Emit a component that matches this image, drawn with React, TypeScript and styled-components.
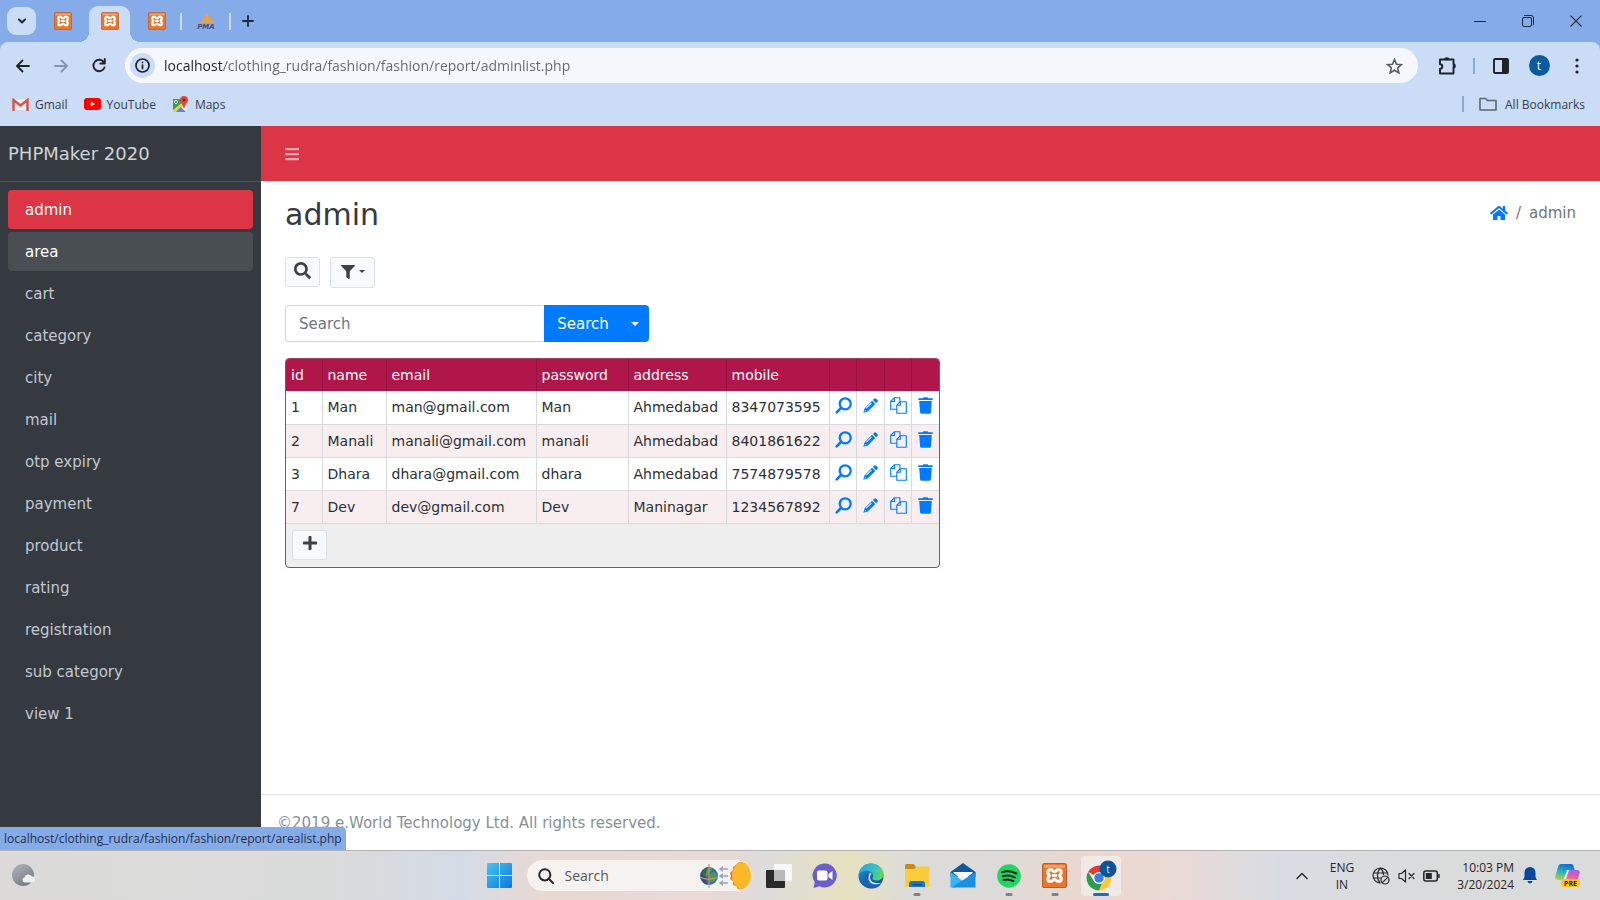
import React, { useState } from "react";
import styled, { createGlobalStyle, css } from "styled-components";
import { FaBars, FaFilter, FaHome, FaPlus, FaSearch } from "react-icons/fa";

const ui = `"Open Sans", "Noto Sans", sans-serif`;
const body = `"DejaVu Sans", Verdana, sans-serif`;

const GlobalStyle = createGlobalStyle`
  *, *::before, *::after { box-sizing: border-box; }
  body { margin: 0; font-family: ${body}; font-size: 14px; color: #212529; background: #fff; }
  button { font: inherit; padding: 0; border: 0; background: none; color: inherit; cursor: pointer; }
  a { color: inherit; text-decoration: none; }
  svg { display: block; flex: none; }
`;

const Screen = styled.div`
  min-height: 100vh;
  display: flex;
  flex-direction: column;
`;

/* ---------- Browser window ---------- */

const TabStrip = styled.div`
  display: flex;
  align-items: flex-end;
  height: 42px;
  background: #86abe9;
  color: #1f2937;
`;

const TabSearch = styled.button`
  width: 29px;
  height: 28px;
  margin: 0 3px 7px 7px;
  display: grid;
  place-items: center;
  border-radius: 9px;
  background: #cbdcf7;
`;

const Tab = styled.button<{ $active?: boolean }>`
  position: relative;
  width: 41px;
  height: 36px;
  margin: 0 3px;
  padding-bottom: 6px;
  display: grid;
  place-items: center;
  border-radius: 9px 9px 0 0;
  ${(p) =>
    p.$active &&
    css`
      background: #cbdcf7;
      &::before,
      &::after {
        content: "";
        position: absolute;
        bottom: 0;
        width: 10px;
        height: 10px;
      }
      &::before {
        right: 100%;
        background: radial-gradient(circle at 0 0, transparent 10px, #cbdcf7 10px);
      }
      &::after {
        left: 100%;
        background: radial-gradient(circle at 100% 0, transparent 10px, #cbdcf7 10px);
      }
    `}
`;

const TabDivider = styled.span`
  width: 2px;
  height: 17px;
  margin-bottom: 12px;
  background: #cbdcf7;
`;

const NewTab = styled.button`
  width: 33px;
  height: 42px;
  display: grid;
  place-items: center;
`;

const WindowButtons = styled.div`
  display: flex;
  height: 42px;
  margin-left: auto;
`;

const WindowButton = styled.button`
  width: 48px;
  display: grid;
  place-items: center;
`;

const Chrome = styled.header`
  background: #86abe9;
  font-family: ${ui};
`;

const ChromePanel = styled.div`
  height: 84px;
  border-radius: 8px 8px 0 0;
  background: #cbdcf7;
`;

const Toolbar = styled.div`
  display: flex;
  align-items: center;
  height: 47px;
  padding: 0 4px;
  color: #1f2328;
`;

const ToolButton = styled.button<{ $dim?: boolean }>`
  width: 38px;
  height: 36px;
  display: grid;
  place-items: center;
  color: ${(p) => (p.$dim ? "#8494ad" : "inherit")};
`;

const AddressBar = styled.div`
  flex: 1;
  height: 35px;
  margin: 0 10px 0 7px;
  padding: 0 15px 0 5px;
  display: flex;
  align-items: center;
  gap: 9px;
  border-radius: 18px;
  background: #f4f8fd;
`;

const SiteInfo = styled.button`
  width: 25px;
  height: 25px;
  display: grid;
  place-items: center;
  border-radius: 50%;
  background: #cbdcf7;
`;

const AddressInput = styled.input`
  flex: 1;
  min-width: 0;
  padding: 0;
  border: 0;
  outline: 0;
  font-family: ${ui};
  font-size: 14px;
  color: transparent;
  background: linear-gradient(90deg, #1f2328 59px, #62676e 59px);
  background-clip: text;
  -webkit-background-clip: text;
`;

const BarDivider = styled.span`
  width: 2px;
  height: 16px;
  margin: 0 7px;
  background: #86abe9;
`;

const Profile = styled.span`
  width: 21px;
  height: 21px;
  display: grid;
  place-items: center;
  border-radius: 50%;
  background: #0b5a9d;
  color: #fff;
  font-size: 12px;
  line-height: 20px;
`;

const Bookmarks = styled.nav`
  display: flex;
  align-items: center;
  gap: 16px;
  height: 30px;
  padding: 0 15px 0 12px;
  font-size: 12px;
  color: #34404f;
`;

const Bookmark = styled.a`
  display: flex;
  align-items: center;
  gap: 6px;
`;

const AllBookmarks = styled.div`
  display: flex;
  align-items: center;
  gap: 8px;
  margin-left: auto;
`;

/* ---------- Web page ---------- */

const Page = styled.div`
  position: relative;
  flex: 1;
  display: flex;
`;

const Sidebar = styled.aside`
  width: 261px;
  flex: none;
  background: #343a40;
  color: #c2c7d0;
`;

const Brand = styled.a`
  display: flex;
  align-items: center;
  height: 56px;
  padding: 0 8px;
  border-bottom: 1px solid #4b545c;
  font-size: 18px;
  color: #d0d3d6;
`;

const Menu = styled.nav`
  display: flex;
  flex-direction: column;
  gap: 3px;
  padding: 8px;
`;

const MenuLink = styled.a<{ $state?: "active" | "hover" }>`
  height: 39px;
  padding: 0 17px;
  display: flex;
  align-items: center;
  border-radius: 4px;
  font-size: 15px;
  color: ${(p) => (p.$state ? "#fff" : "#c2c7d0")};
  background: ${(p) =>
    p.$state === "active" ? "#dc3545" : p.$state === "hover" ? "#494e53" : "transparent"};
`;

const Main = styled.div`
  flex: 1;
  min-width: 0;
  display: flex;
  flex-direction: column;
`;

const NavBar = styled.div`
  height: 55px;
  padding: 0 23px;
  display: flex;
  align-items: center;
  background: #dc3545;
  color: #f3a9b0;
`;

const Content = styled.main`
  flex: 1;
  padding: 16px 24px;
`;

const Heading = styled.div`
  display: flex;
  justify-content: space-between;
  align-items: flex-start;
  height: 60px;
`;

const Title = styled.h1`
  margin: 0;
  font-size: 30px;
  line-height: 36px;
  font-weight: 400;
  color: #343a40;
`;

const Crumbs = styled.nav`
  display: flex;
  align-items: center;
  gap: 8px;
  height: 32px;
  font-size: 15px;
  color: #6c757d;
  a { color: #007bff; }
`;

const Tools = styled.div`
  display: flex;
  gap: 10px;
  height: 48px;
  align-items: flex-start;
`;

const LightButton = styled.button<{ $wide?: boolean }>`
  width: ${(p) => (p.$wide ? 45 : 35)}px;
  height: ${(p) => (p.$wide ? 31 : 30)}px;
  padding-bottom: ${(p) => (p.$wide ? 2 : 4)}px;
  display: flex;
  align-items: center;
  justify-content: center;
  gap: 4px;
  border: 1px solid #dddfe2;
  border-radius: 3px;
  background: #f8f9fa;
  color: #3c4147;
`;

const Caret = styled.span<{ $size: number }>`
  border: ${(p) => p.$size}px solid transparent;
  border-top-color: currentColor;
  border-bottom: 0;
`;

const SearchForm = styled.form`
  display: flex;
  width: 364px;
  height: 37px;
  margin-bottom: 16px;
`;

const SearchInput = styled.input`
  flex: 1;
  min-width: 0;
  padding: 0 13px;
  border: 1px solid #ced4da;
  border-right: 0;
  border-radius: 4px 0 0 4px;
  font-family: ${body};
  font-size: 15px;
  &::placeholder { color: #6c757d; opacity: 1; }
`;

const SearchButton = styled.button`
  width: 76px;
  padding-left: 2px;
  background: #007bff;
  color: #fff;
  font-size: 15px;
`;

const SearchMenu = styled.button`
  width: 29px;
  display: grid;
  place-items: center;
  border-radius: 0 4px 4px 0;
  background: #007bff;
  color: #fff;
`;

const GridBox = styled.div`
  width: 655px;
  border: 1px solid #a04464;
  border-radius: 4px;
  overflow: hidden;
  background: #eee;
`;

const Table = styled.table`
  width: 100%;
  table-layout: fixed;
  border-collapse: collapse;
  font-size: 14px;
`;

const HeadCell = styled.th`
  height: 32px;
  padding: 0 5px;
  border-right: 1px solid #8f1540;
  background: #b0164a;
  color: #fff;
  font-weight: 400;
  text-align: left;
  &:last-child { border-right: 0; }
`;

const Row = styled.tr`
  background: #fff;
  &:nth-child(even) { background: #f8edef; }
`;

const Cell = styled.td`
  height: 33px;
  padding: 0 5px;
  border-right: 1px solid #d9dadd;
  border-bottom: 1px solid #d9dadd;
  white-space: nowrap;
  color: #2b3035;
  &:last-child { border-right: 0; }
`;

const RowAction = styled.a`
  display: grid;
  place-items: center;
  padding-bottom: 3px;
  color: #007bff;
`;

const GridFooter = styled.div`
  height: 43px;
  padding: 6px;
`;

const Footer = styled.footer`
  height: 56px;
  padding: 0 16px;
  display: flex;
  align-items: center;
  border-top: 1px solid #dee2e6;
  font-size: 15px;
  color: #869099;
`;

const LinkStatus = styled.div`
  position: absolute;
  left: 0;
  bottom: 0;
  height: 23px;
  padding: 0 4px;
  border-radius: 0 4px 0 0;
  background: #86abe9;
  font-family: ${ui};
  font-size: 12px;
  line-height: 23px;
  color: #1f2f49;
`;

/* ---------- Taskbar ---------- */

const Taskbar = styled.footer`
  display: grid;
  grid-template-columns: 1fr auto 1fr;
  align-items: center;
  height: 50px;
  border-top: 1px solid #b3b3b3;
  background: linear-gradient(
    90deg,
    #dbdad9 0%,
    #d9dbda 20%,
    #d5dbe6 29%,
    #e8d9d3 34%,
    #ead9d4 44%,
    #dddcda 48%,
    #e6e1bf 53%,
    #dcdcdb 57%,
    #dddbda 62%,
    #ead7cf 68%,
    #ead9d4 73%,
    #d9dde3 80%,
    #dadbdc 88%,
    #dbdbdb 100%
  );
  font-family: ${ui};
  color: #24272b;
`;

const Weather = styled.button`
  justify-self: start;
  margin-left: 12px;
`;

const Apps = styled.div`
  display: flex;
  align-items: center;
  gap: 6px;
`;

const AppButton = styled.button<{ $active?: boolean }>`
  position: relative;
  width: 40px;
  height: 40px;
  display: grid;
  place-items: center;
  border-radius: 4px;
  background: ${(p) => (p.$active ? "#f1e9e6" : "none")};
`;

const Running = styled.span<{ $active?: boolean }>`
  position: absolute;
  bottom: 0;
  left: 50%;
  width: ${(p) => (p.$active ? 16 : 7)}px;
  height: 3px;
  border-radius: 2px;
  transform: translateX(-50%);
  background: ${(p) => (p.$active ? "#1271c4" : "#85807e")};
`;

const TaskSearch = styled.label`
  display: flex;
  align-items: center;
  gap: 11px;
  width: 227px;
  height: 33px;
  padding: 0 0 0 11px;
  border: 1px solid #e4dcd9;
  border-radius: 17px;
  background: #f6f2f0;
  input {
    flex: 1;
    min-width: 0;
    padding: 0;
    border: 0;
    outline: 0;
    background: none;
    font-family: ${ui};
    font-size: 14px;
  }
  input::placeholder { color: #55585b; opacity: 1; }
`;

const Tray = styled.div`
  justify-self: end;
  display: flex;
  align-items: center;
  padding-right: 20px;
  font-size: 12px;
  line-height: 17px;
`;

const Language = styled.button`
  margin: 0 18px 0 22px;
  text-align: center;
`;

const Status = styled.button`
  display: flex;
  align-items: center;
  gap: 8px;
`;

const Clock = styled.button`
  margin: 0 9px 0 17px;
  text-align: right;
`;

const Bell = styled.button`
  margin-right: 18px;
`;

/* ---------- Drawings ---------- */

const Xampp = ({ size }: { size: number }) => (
  <svg width={size} height={size} viewBox="0 0 24 24">
    <rect x="0.5" y="0.5" width="23" height="23" rx="2" fill="#ee7528" stroke="#b3602f" />
    <path d="M2 2h20v2.500H2z" fill="#f9a069" />
    <path
      d="M7.500 6.500h1.600c1 0 1.200 1.800 2.900 1.800s1.900-1.800 2.900-1.800h1.600c1.400 0 1.800 1 1.800 2v1.200c0 1-1.300 1.300-1.300 2.300s1.300 1.300 1.300 2.300v1.200c0 1-.4 2-1.800 2h-1.600c-1 0-1.200-1.800-2.900-1.800s-1.900 1.800-2.900 1.800H7.500c-1.400 0-1.800-1-1.800-2v-1.200c0-1 1.300-1.300 1.300-2.300S5.700 10.700 5.700 9.700V8.500c0-1 .4-2 1.800-2z"
      fill="none"
      stroke="#fff"
      strokeWidth="3"
      strokeLinejoin="round"
    />
    <path d="M9.500 12h5" stroke="#fff" strokeWidth="2.600" />
  </svg>
);

const Pma = () => (
  <svg width="18" height="18" viewBox="0 0 18 18">
    <path d="M8 11C9 8 9 4 8.500 0c3 3 5 7 5 11zM2 11c3-1 5-4 5.500-8 .8 3 .5 6-.5 8zM14 11c0-3-.8-5-1.500-7 2.500 2 4 4 4.500 7z" fill="#f0a13c" />
    <text x="9" y="17" fontSize="7" fontWeight="700" fontStyle="italic" fontFamily="DejaVu Sans, sans-serif" textAnchor="middle" fill="#4a4c83">PMA</text>
  </svg>
);

const stroke = { fill: "none", stroke: "currentColor", strokeLinejoin: "round", strokeLinecap: "round" } as const;

const Chevron = ({ up }: { up?: boolean }) => (
  <svg width="12" height="12" viewBox="0 0 12 12" {...stroke} strokeWidth={up ? 1.4 : 2}>
    <path d={up ? "M1 8.500L6 3.500L11 8.500" : "M3 4.500L6 7.500L9 4.500"} />
  </svg>
);

const Gmail = () => (
  <svg width="17" height="13" viewBox="0 0 17 13">
    <path d="M1 1.500h15V12H1z" fill="#eceff3" />
    <path d="M1.500 13V2l7 5.500 7-5.500v11" fill="none" stroke="#d95045" strokeWidth="2.400" />
  </svg>
);

const YouTube = () => (
  <svg width="17" height="12" viewBox="0 0 17 12">
    <rect width="17" height="12" rx="3" fill="#f00" />
    <path d="M6.800 3.500v5L11 6z" fill="#fff" />
  </svg>
);

const Maps = () => (
  <svg width="17" height="17" viewBox="0 0 17 17">
    <path d="M1 3h14v13H1z" fill="#e6e8e9" />
    <path d="M1 3h9v5l-9 8z" fill="#34a05a" />
    <path d="M1 14L12 5l2 2-9 9H1z" fill="#f5cc43" />
    <path d="M4 16l4.500-5 5.500 5z" fill="#4a8af0" />
    <circle cx="4" cy="6" r="1.600" fill="none" stroke="#fff" />
    <path d="M12 0a4 4 0 0 1 4 4c0 3-3 4-3.500 8h-1C11 8 8 7 8 4a4 4 0 0 1 4-4z" fill="#dd4b3e" />
    <circle cx="12" cy="4" r="1.400" fill="#7c211b" />
  </svg>
);

const ViewIcon = () => (
  <svg width="17" height="17" viewBox="0 0 17 17" fill="none" stroke="currentColor">
    <circle cx="10.200" cy="6.800" r="5.500" strokeWidth="2.300" />
    <path d="M6 11L1.700 15.300" strokeWidth="2.600" strokeLinecap="round" />
  </svg>
);

const EditIcon = () => (
  <svg width="15" height="15" viewBox="0 0 15 15" fill="currentColor">
    <path d="M11.200.7a1.400 1.400 0 0 1 2 0l1.200 1.200a1.400 1.400 0 0 1 0 2l-1.300 1.300-3.200-3.200zM9.100 2.800L12.300 6 4.700 13.600.3 14.800 1.500 10.400zM3.600 10.600l5.200-5.200-.7-.7-5.200 5.200zM1.600 13.500l1.500-.4-1.100-1.100z" fillRule="evenodd" />
  </svg>
);

const CopyIcon = () => (
  <svg width="17" height="17" viewBox="0 0 17 17" fill="none" stroke="currentColor" strokeWidth="1.100" strokeLinejoin="round">
    <path d="M6.500 12.200H.7V4.500L4.500.7h5.400v4M4.500.7v3.800H.7M10.300 4.700h6v11.600H6.800V8.200zM10.300 4.700v3.600H6.800" />
  </svg>
);

const TrashIcon = () => (
  <svg width="15" height="17" viewBox="0 0 15 17" fill="currentColor">
    <path d="M.3 1.300h4.300L5.400.3h4.200l.8 1h4.300v1.600H.3zM1.200 4h12.600l-.9 11.500a1.500 1.500 0 0 1-1.500 1.300H3.600a1.500 1.500 0 0 1-1.500-1.300z" />
  </svg>
);

const WeatherIcon = () => (
  <svg width="23" height="23" viewBox="0 0 23 23">
    <defs>
      <linearGradient id="moon" x1="0" y1="0" x2="0.600" y2="1">
        <stop offset="0" stopColor="#b2b8bf" />
        <stop offset="1" stopColor="#747b84" />
      </linearGradient>
    </defs>
    <circle cx="11" cy="11" r="11" fill="url(#moon)" />
    <path d="M12.500 18.500a2.700 2.700 0 0 1 0-5.200 4 4 0 0 1 7.300-.8 3 3 0 0 1 1 6z" fill="#edf0f3" />
  </svg>
);

const Windows = () => (
  <svg width="25" height="25" viewBox="0 0 25 25">
    <defs>
      <linearGradient id="win" x1="0" y1="0" x2="1" y2="1">
        <stop offset="0" stopColor="#45c6f5" />
        <stop offset="1" stopColor="#0b77d6" />
      </linearGradient>
    </defs>
    <path d="M1 0h11v12H0V1a1 1 0 0 1 1-1zM13 0h11a1 1 0 0 1 1 1v11H13zM0 13h12v12H1a1 1 0 0 1-1-1zM13 13h12v11a1 1 0 0 1-1 1H13z" fill="url(#win)" />
  </svg>
);

const Equinox = () => (
  <svg width="54" height="29" viewBox="0 0 54 29">
    <circle cx="11" cy="15" r="9" fill="#326fa8" />
    <path d="M5 9c3-4 8-3 9-1 0 3-3 2-3 5s-5 3-7 1zM13 12c3-2 6 0 6 3-1 4-4 7-6 6-1-3-2-6 0-9z" fill="#4f9a51" />
    <path d="M3 12a9 9 0 0 0 7 12c-4-5-3-14 1-18a9 9 0 0 0-8 6z" fill="#20364f" opacity="0.500" />
    <path d="M11 3v24M2 16c5 3 13 3 18 0" stroke="#e18b6b" strokeWidth="1.200" fill="none" />
    <path d="M22 8h8M22 15h8M22 22h8M25 5.800L22 8l3 2.200M25 12.800L22 15l3 2.200M25 19.800L22 22l3 2.200" stroke="#91a6c4" strokeWidth="1.400" fill="none" />
    <path d="M41 1l-3 3-3 2 0 3-3 3 1 3-1 3 3 2 0 4 3 1 2 3h5V1z" fill="#e37a26" />
    <path d="M42 1c7 0 11 6 11 13.500S49 28 42 28c-6-3-8-8-8-13.500S37 4 42 1z" fill="#fbb829" />
  </svg>
);

const TaskView = () => (
  <svg width="26" height="25" viewBox="0 0 26 25">
    <rect x="0" y="7" width="19" height="18" rx="1" fill="#29292a" />
    <rect x="8" y="1" width="18" height="17" rx="1" fill="#f7f7f7" />
    <path d="M8 7h11v11H8z" fill="#b9b9b9" />
  </svg>
);

const Chat = () => (
  <svg width="25" height="25" viewBox="0 0 25 25">
    <path d="M13 .5a12 12 0 1 1-5.500 22.800L1.500 25l1.200-5.800A12 12 0 0 1 13 .5z" fill="#6b5fc7" />
    <rect x="5" y="7.500" width="10.500" height="10" rx="2" fill="#fff" />
    <path d="M16.500 11l4-3v9l-4-3z" fill="#fff" />
  </svg>
);

const Edge = () => (
  <svg width="26" height="26" viewBox="0 0 26 26">
    <defs>
      <linearGradient id="edgeTop" x1="0" y1="0.300" x2="1" y2="0.500">
        <stop offset="0" stopColor="#2ba6e0" />
        <stop offset="0.600" stopColor="#35c1c0" />
        <stop offset="1" stopColor="#65d957" />
      </linearGradient>
      <linearGradient id="edgeBase" x1="0" y1="0" x2="0.600" y2="1">
        <stop offset="0" stopColor="#1c8fdc" />
        <stop offset="1" stopColor="#114f9b" />
      </linearGradient>
    </defs>
    <circle cx="13" cy="13" r="12.500" fill="url(#edgeBase)" />
    <path d="M.6 12C1.400 5 6.500.5 13 .5c7 0 12.500 5 12.500 10.500 0 4-3 6.500-6.500 6.500-3 0-5-1-4.500-2.500 1-1.500 1-3.500-.5-5C11 7 4 6.500.6 12z" fill="url(#edgeTop)" />
    <path d="M12 9.500c-6 4-3 13 3.500 13.500 3 .2 6-1 8-3.500-3 1-11 1.500-11.500-5-.1-1.500.6-2.500 1.500-3.500z" fill="#dbe4e6" />
    <path d="M12 9.500c-7 2-7 13 2 15.800 4 .5 8-1.800 9.500-5.800-5 3.500-13 2-13-4.500 0-2 .8-4 1.500-5.500z" fill="#1a62b4" />
  </svg>
);

const Folder = () => (
  <svg width="26" height="24" viewBox="0 0 26 24">
    <path d="M1 1.500A1.500 1.500 0 0 1 2.500 0h7l2.500 3v4H1z" fill="#c98b10" />
    <path d="M1 5h9l3-2.500h11a1.500 1.500 0 0 1 1.500 1.500v18a1 1 0 0 1-1 1H2a1 1 0 0 1-1-1z" fill="#fbcb3e" />
    <path d="M5 23v-3.500a2.500 2.500 0 0 1 2.500-2.500h11a2.500 2.500 0 0 1 2.500 2.500V23z" fill="#1a76c9" />
    <path d="M8.500 20h9v1.500h-9z" fill="#0b5192" />
  </svg>
);

const Mail = () => (
  <svg width="26" height="25" viewBox="0 0 26 25">
    <path d="M.5 9L13 0l12.500 9v5H.5z" fill="#12569b" />
    <path d="M3 9.500h20L13 18z" fill="#fff" />
    <path d="M.5 9L16 20.500 6 24.500H.5z" fill="#37b5f3" />
    <path d="M25.500 9v15.500H1.500z" fill="#1b8fe3" />
    <path d="M3 9h20l-10 7.500z" fill="#f5f9fc" />
  </svg>
);

const Spotify = () => (
  <svg width="24" height="24" viewBox="0 0 24 24">
    <circle cx="12" cy="12" r="11.800" fill="#1fd661" />
    <path d="M5 8.300c5-1.600 10-1 14.300 1.200M5.800 12.300c4.300-1.300 8.500-.8 12 1.200M6.500 16c3.600-1 7-.6 10 1.100" fill="none" stroke="#101c14" strokeWidth="2" strokeLinecap="round" />
  </svg>
);

const ChromeLogo = () => (
  <svg width="34" height="32" viewBox="-1 0 34 32">
    <path d="M14 18L3.200 11.800A12.500 12.500 0 0 1 24.800 11.800z" fill="#e33b2e" />
    <path d="M14 12h10.800A12.500 12.500 0 0 1 14 30.500l4-9z" fill="#fcc934" />
    <path d="M3.200 11.800L8.800 21l8.200 2.500-3 7A12.500 12.500 0 0 1 3.200 11.800z" fill="#2a9e4b" />
    <circle cx="14" cy="18" r="6" fill="#fff" />
    <circle cx="14" cy="18" r="4.700" fill="#3a7de8" />
    <circle cx="23" cy="9" r="8.500" fill="#0b5596" />
    <text x="23" y="12.500" fontSize="10" textAnchor="middle" fontFamily="Open Sans, sans-serif" fill="#d8e7f5">t</text>
  </svg>
);

const NetworkIcon = () => (
  <svg width="18" height="18" viewBox="0 0 18 18" {...stroke} strokeWidth="1.200">
    <path d="M16 8A7.500 7.500 0 1 0 8 16M1.500 6h14M1.500 11h7M8.500 1c-4 4-4 11-.5 15M8.500 1c2 2 3 4 3 6.500" />
    <circle cx="13" cy="13" r="4" />
    <path d="M10.300 15.700l5.400-5.400" />
  </svg>
);

const MuteIcon = () => (
  <svg width="17" height="16" viewBox="0 0 17 16" {...stroke} strokeWidth="1.200">
    <path d="M1 5.500h2.500L7.500 2v12L3.500 10.500H1zM11 5.500l5 5M16 5.500l-5 5" />
  </svg>
);

const BatteryIcon = () => (
  <svg width="17" height="12" viewBox="0 0 17 12">
    <rect x="0.800" y="1" width="13.500" height="10" rx="2" fill="none" stroke="currentColor" strokeWidth="1.500" />
    <path d="M2.800 3h6v6h-6zM15.200 4h1.500v4h-1.500z" fill="currentColor" />
  </svg>
);

const Copilot = () => (
  <svg width="25" height="25" viewBox="0 0 25 25">
    <defs>
      <linearGradient id="cpA" x1="0.500" y1="0" x2="0.200" y2="1">
        <stop offset="0" stopColor="#1767d2" />
        <stop offset="0.500" stopColor="#25b5bd" />
        <stop offset="1" stopColor="#c9cf3f" />
      </linearGradient>
      <linearGradient id="cpB" x1="0.500" y1="0" x2="0.300" y2="1">
        <stop offset="0" stopColor="#9f61e7" />
        <stop offset="0.600" stopColor="#ec5da4" />
        <stop offset="1" stopColor="#f58a5b" />
      </linearGradient>
    </defs>
    <path d="M6 1h10c2 0 2.500 1.500 3 4l1 3h-6l-3 8c-.5 1-1.500 1-2.500 1H3c-2.500 0-3.500-2-2.500-4.500L3 4c.6-2 1.500-3 3-3z" fill="url(#cpA)" />
    <path d="M15 7h7c2.500 0 3 2 2.400 4l-2 7H10l2.500-8.500C13 8 13.600 7 15 7z" fill="url(#cpB)" />
    <path d="M12 7h2l-3 9H9z" fill="#eef3f7" />
    <rect x="6" y="16" width="19" height="8" rx="2" fill="#fcc526" />
    <text x="15.500" y="23" fontSize="7" fontWeight="700" textAnchor="middle" fontFamily="Open Sans, sans-serif" fill="#2c2410">PRE</text>
  </svg>
);

/* ---------- Data ---------- */

const menu = ["admin", "area", "cart", "category", "city", "mail", "otp expiry", "payment", "product", "rating", "registration", "sub category", "view 1"];

const columns = [
  { label: "id", width: 36 },
  { label: "name", width: 64 },
  { label: "email", width: 150 },
  { label: "password", width: 92 },
  { label: "address", width: 98 },
  { label: "mobile", width: 103 },
];

const records = [
  ["1", "Man", "man@gmail.com", "Man", "Ahmedabad", "8347073595"],
  ["2", "Manali", "manali@gmail.com", "manali", "Ahmedabad", "8401861622"],
  ["3", "Dhara", "dhara@gmail.com", "dhara", "Ahmedabad", "7574879578"],
  ["7", "Dev", "dev@gmail.com", "Dev", "Maninagar", "1234567892"],
];

const actions = [
  { name: "View", icon: <ViewIcon /> },
  { name: "Edit", icon: <EditIcon /> },
  { name: "Copy", icon: <CopyIcon /> },
  { name: "Delete", icon: <TrashIcon /> },
];

const apps = [
  { name: "Task view", icon: <TaskView /> },
  { name: "Chat", icon: <Chat /> },
  { name: "Edge", icon: <Edge /> },
  { name: "File Explorer", icon: <Folder />, running: true },
  { name: "Mail", icon: <Mail /> },
  { name: "Spotify", icon: <Spotify />, running: true },
  { name: "XAMPP", icon: <Xampp size={25} />, running: true },
  { name: "Chrome", icon: <ChromeLogo />, running: true, active: true },
];

function BrowserChrome() {
  const [url, setUrl] = useState("localhost/clothing_rudra/fashion/fashion/report/adminlist.php");
  return (
    <Chrome>
      <TabStrip>
        <TabSearch aria-label="Search tabs"><Chevron /></TabSearch>
        <Tab aria-label="XAMPP tab"><Xampp size={18} /></Tab>
        <Tab $active aria-label="admin tab"><Xampp size={18} /></Tab>
        <Tab aria-label="XAMPP tab"><Xampp size={18} /></Tab>
        <TabDivider />
        <Tab aria-label="phpMyAdmin tab"><Pma /></Tab>
        <TabDivider />
        <NewTab aria-label="New tab">
          <svg width="12" height="12" viewBox="0 0 12 12" {...stroke} strokeWidth="1.800"><path d="M6 1v10M1 6h10" /></svg>
        </NewTab>
        <WindowButtons>
          <WindowButton aria-label="Minimize">
            <svg width="12" height="12" viewBox="0 0 12 12" {...stroke}><path d="M.5 6.500h11" /></svg>
          </WindowButton>
          <WindowButton aria-label="Restore">
            <svg width="12" height="12" viewBox="0 0 12 12" {...stroke}>
              <rect x="0.500" y="2.500" width="9" height="9" rx="1.500" />
              <path d="M2.500.5H9a2.500 2.500 0 0 1 2.500 2.500v6.500" />
            </svg>
          </WindowButton>
          <WindowButton aria-label="Close">
            <svg width="12" height="12" viewBox="0 0 12 12" {...stroke} strokeWidth="1.200"><path d="M.8.8l10.400 10.400M11.200.8L.8 11.200" /></svg>
          </WindowButton>
        </WindowButtons>
      </TabStrip>
      <ChromePanel>
        <Toolbar>
          <ToolButton aria-label="Back">
            <svg width="14" height="14" viewBox="0 0 14 14" {...stroke} strokeWidth="1.800"><path d="M13 7H1.500M6.500 1.500L1 7l5.500 5.500" /></svg>
          </ToolButton>
          <ToolButton $dim aria-label="Forward">
            <svg width="14" height="14" viewBox="0 0 14 14" {...stroke} strokeWidth="1.800"><path d="M1 7h11.500M7.500 1.500L13 7l-5.500 5.500" /></svg>
          </ToolButton>
          <ToolButton aria-label="Reload">
            <svg width="15" height="15" viewBox="0 0 15 15" {...stroke} strokeWidth="1.900">
              <path d="M12.500 9.500A5.700 5.700 0 1 1 11.800 4.200M12.800 1v4.500H8.300" />
            </svg>
          </ToolButton>
          <AddressBar>
            <SiteInfo aria-label="Site information">
              <svg width="15" height="15" viewBox="0 0 15 15" {...stroke} strokeWidth="1.700">
                <circle cx="7.500" cy="7.500" r="6.500" />
                <path d="M7.500 7v3.500M7.500 4.300v.1" />
              </svg>
            </SiteInfo>
            <AddressInput aria-label="Address" value={url} onChange={(e) => setUrl(e.target.value)} />
            <svg width="17" height="16" viewBox="0 0 17 16" fill="none" stroke="#555c66" strokeWidth="1.600">
              <path d="M8.500 1.500l2 4.700 5 .4-3.800 3.300 1.200 5-4.400-2.700-4.400 2.700 1.200-5L1.500 6.600l5-.4z" />
            </svg>
          </AddressBar>
          <ToolButton aria-label="Extensions">
            <svg width="19" height="18" viewBox="0 0 19 18" {...stroke} strokeWidth="1.900">
              <path d="M2 2.500h13.500v4.300M15.500 11v5.500H2v-4.700a2.300 2.300 0 0 0 0-4.600V2.500" />
              <path d="M7 2.300a1.700 1.200 0 0 1 3.400 0zM15.700 7.200a1.200 1.700 0 0 1 0 3.400z" fill="currentColor" />
            </svg>
          </ToolButton>
          <BarDivider />
          <ToolButton aria-label="Side panel">
            <svg width="16" height="16" viewBox="0 0 16 16">
              <rect x="1" y="1" width="14" height="14" rx="1" fill="none" stroke="currentColor" strokeWidth="1.900" />
              <path d="M9 1h6v14H9z" fill="currentColor" />
            </svg>
          </ToolButton>
          <ToolButton aria-label="Profile"><Profile>t</Profile></ToolButton>
          <ToolButton aria-label="Menu">
            <svg width="4" height="16" viewBox="0 0 4 16" fill="currentColor">
              <circle cx="2" cy="2" r="1.600" /><circle cx="2" cy="8" r="1.600" /><circle cx="2" cy="14" r="1.600" />
            </svg>
          </ToolButton>
        </Toolbar>
        <Bookmarks>
          <Bookmark href="#gmail"><Gmail />Gmail</Bookmark>
          <Bookmark href="#youtube"><YouTube />YouTube</Bookmark>
          <Bookmark href="#maps"><Maps />Maps</Bookmark>
          <AllBookmarks>
            <BarDivider />
            <svg width="18" height="14" viewBox="0 0 18 14" fill="none" stroke="#5d6672" strokeWidth="1.600" strokeLinejoin="round">
              <path d="M1 1.500h5.500l2 2H17V13H1z" />
            </svg>
            <a href="#bookmarks">All Bookmarks</a>
          </AllBookmarks>
        </Bookmarks>
      </ChromePanel>
    </Chrome>
  );
}

function AdminPage() {
  return (
    <Page>
      <Sidebar>
        <Brand href="#home">PHPMaker 2020</Brand>
        <Menu>
          {menu.map((item, i) => (
            <MenuLink key={item} href={`#${item.replace(" ", "-")}`} $state={i === 0 ? "active" : i === 1 ? "hover" : undefined}>
              {item}
            </MenuLink>
          ))}
        </Menu>
      </Sidebar>
      <Main>
        <NavBar>
          <button aria-label="Toggle menu"><FaBars size={16} /></button>
        </NavBar>
        <Content>
          <Heading>
            <Title>admin</Title>
            <Crumbs>
              <a href="#home" aria-label="Home"><FaHome size={18} /></a>
              <span>/</span>
              <span>admin</span>
            </Crumbs>
          </Heading>
          <Tools>
            <LightButton aria-label="Search panel"><FaSearch size={17} /></LightButton>
            <LightButton $wide aria-label="Filters"><FaFilter size={14} /><Caret $size={3} /></LightButton>
          </Tools>
          <SearchForm onSubmit={(e) => e.preventDefault()}>
            <SearchInput aria-label="Search" placeholder="Search" />
            <SearchButton type="submit">Search</SearchButton>
            <SearchMenu type="button" aria-label="Search options"><Caret $size={4} /></SearchMenu>
          </SearchForm>
          <GridBox>
            <Table>
              <colgroup>
                {columns.map((c) => <col key={c.label} width={c.width} />)}
                {actions.map((a) => <col key={a.name} />)}
              </colgroup>
              <thead>
                <tr>
                  {columns.map((c) => <HeadCell key={c.label}>{c.label}</HeadCell>)}
                  {actions.map((a) => <HeadCell key={a.name} aria-label={a.name} />)}
                </tr>
              </thead>
              <tbody>
                {records.map((r) => (
                  <Row key={r[0]}>
                    {r.map((value, i) => <Cell key={i}>{value}</Cell>)}
                    {actions.map((a) => (
                      <Cell key={a.name}>
                        <RowAction href={`#${a.name.toLowerCase()}-${r[0]}`} aria-label={a.name}>{a.icon}</RowAction>
                      </Cell>
                    ))}
                  </Row>
                ))}
              </tbody>
            </Table>
            <GridFooter>
              <LightButton aria-label="Add"><FaPlus size={16} /></LightButton>
            </GridFooter>
          </GridBox>
        </Content>
        <Footer>©2019 e.World Technology Ltd. All rights reserved.</Footer>
      </Main>
      <LinkStatus>localhost/clothing_rudra/fashion/fashion/report/arealist.php</LinkStatus>
    </Page>
  );
}

function WindowsTaskbar() {
  return (
    <Taskbar>
      <Weather aria-label="Weather"><WeatherIcon /></Weather>
      <Apps>
        <AppButton aria-label="Start"><Windows /></AppButton>
        <TaskSearch>
          <svg width="16" height="16" viewBox="0 0 16 16" {...stroke} strokeWidth="2">
            <circle cx="6.800" cy="6.800" r="5.600" /><path d="M11 11l4 4" />
          </svg>
          <input aria-label="Search Windows" placeholder="Search" />
          <Equinox />
        </TaskSearch>
        {apps.map((a) => (
          <AppButton key={a.name} aria-label={a.name} $active={a.active}>
            {a.icon}
            {a.running && <Running $active={a.active} />}
          </AppButton>
        ))}
      </Apps>
      <Tray>
        <button aria-label="Hidden icons"><Chevron up /></button>
        <Language>ENG<br />IN</Language>
        <Status aria-label="System status"><NetworkIcon /><MuteIcon /><BatteryIcon /></Status>
        <Clock>10:03 PM<br />3/20/2024</Clock>
        <Bell aria-label="Notifications">
          <svg width="14" height="17" viewBox="0 0 14 17" fill="#0b4797">
            <path d="M7 0a5.500 5.500 0 0 1 5.500 5.500V10l1.500 3H0l1.500-3V5.500A5.500 5.500 0 0 1 7 0zM4.500 14h5a2.500 2.500 0 0 1-5 0z" />
          </svg>
        </Bell>
        <button aria-label="Copilot"><Copilot /></button>
      </Tray>
    </Taskbar>
  );
}

export default function App() {
  return (
    <Screen>
      <GlobalStyle />
      <BrowserChrome />
      <AdminPage />
      <WindowsTaskbar />
    </Screen>
  );
}
